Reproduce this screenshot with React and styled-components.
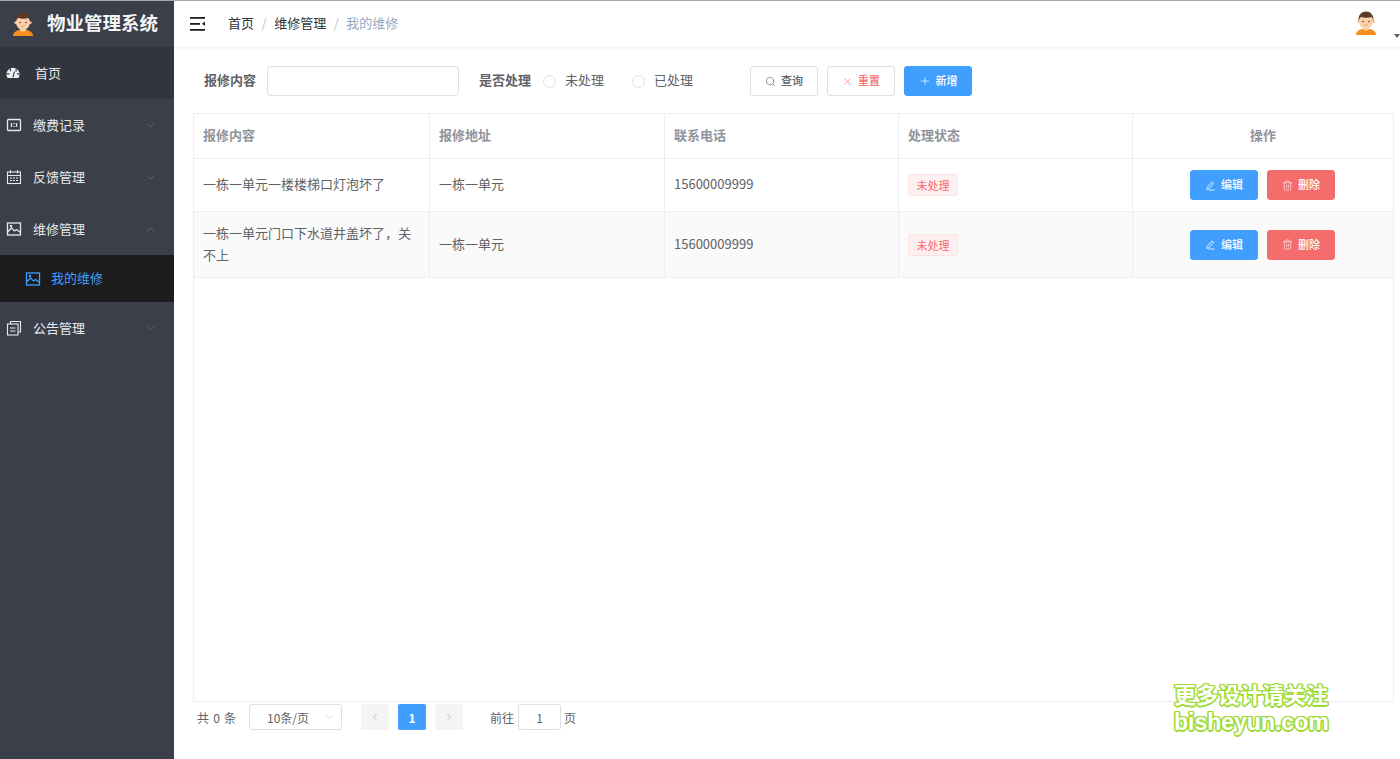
import React from "react";
import styled, { createGlobalStyle } from "styled-components";
import { ChevronDown, ChevronUp, ChevronLeft, ChevronRight, Search, X, Plus, Trash2 } from "lucide-react";

const Global = createGlobalStyle`
  html, body { margin: 0; padding: 0; height: 100%; background: #fff; }
  #root { height: 100%; }
  * { box-sizing: border-box; }
  body { font-family: "Noto Sans CJK SC", "Noto Sans", sans-serif; font-size: 13px; color: #606266; }
`;

const Page = styled.div`
  position: relative;
  display: flex;
  width: 1400px;
  height: 759px;
  overflow: hidden;
  border-top: 1px solid #a9a9a9;
`;
const Sidebar = styled.aside`
  width: 174px;
  flex: none;
  background: #3a3f4a;
  color: #e4e6ea;
  margin-top: -1px;
`;
const Brand = styled.div`
  display: flex;
  align-items: center;
  height: 47px;
  padding-left: 13px;
  gap: 14px;
  font-size: 18.5px;
  font-weight: 700;
  color: #f4f5f6;
  span { padding-bottom: 4px; }
`;
const MenuRow = styled.div`
  display: flex;
  align-items: center;
  height: 52px;
  padding-left: 6px;
  padding-right: 17px;
  background: ${(p) => (p.$home ? "#31353e" : "transparent")};
  gap: ${(p) => (p.$home ? "15px" : "11px")};
  color: #e8e9ec;
`;
const SubRow = styled.div`
  display: flex;
  align-items: center;
  height: 47px;
  padding-left: 25px;
  gap: 10px;
  background: #1c1c1d;
  color: #409eff;
`;
const MenuLabel = styled.span`
  flex: 1;
  padding-bottom: 2px;
`;
const Chevron = styled.span`
  display: flex;
  color: #767b85;
`;
const Main = styled.main`
  flex: 1;
  display: flex;
  flex-direction: column;
  min-width: 0;
`;
const Header = styled.header`
  display: flex;
  align-items: center;
  height: 46px;
  padding-left: 16px;
  box-shadow: 0 1px 4px rgba(0, 21, 41, 0.08);
  flex: none;
`;
const Crumbs = styled.nav`
  display: flex;
  align-items: center;
  margin-left: 22px;
  padding-bottom: 4px;
  flex: 1;
  color: #303133;
`;
const Crumb = styled.span`
  color: ${(p) => (p.$last ? "#97a8be" : "#303133")};
`;
const Sep = styled.span`
  margin: 0 7.5px;
  color: #c0c4cc;
`;
const UserBox = styled.div`
  position: relative;
  width: 44px;
  height: 46px;
  padding-top: 10px;
`;
const Caret = styled.i`
  position: absolute;
  right: 0;
  top: 33px;
  width: 0;
  height: 0;
  border: 3px solid transparent;
  border-top: 4px solid #606266;
`;
const Content = styled.div`
  flex: 1;
  display: flex;
  flex-direction: column;
  padding: 19px 7px 0 19px;
`;
const Filter = styled.div`
  display: flex;
  align-items: center;
  height: 30px;
  padding-left: 11px;
`;
const FilterLabel = styled.label`
  font-weight: 700;
  color: #606266;
  padding-bottom: 4px;
`;
const TextInput = styled.div`
  width: 192px;
  height: 30px;
  margin: 0 20px 0 11px;
  border: 1px solid #dcdfe6;
  border-radius: 4px;
  background: #fff;
`;
const RadioItem = styled.span`
  display: flex;
  align-items: center;
  gap: 9px;
  margin-left: ${(p) => p.$ml}px;
  color: #606266;
  b { font-weight: 400; padding-bottom: 3px; }
`;
const RadioDot = styled.i`
  width: 13px;
  height: 13px;
  border: 1px solid #dcdfe6;
  border-radius: 50%;
`;
const Btn = styled.button`
  display: inline-flex;
  align-items: center;
  justify-content: center;
  gap: 5px;
  width: 68px;
  height: 30px;
  padding: 0;
  border-radius: 3px;
  font: 500 11px "Noto Sans CJK SC", sans-serif;
  border: 1px solid ${(p) => p.$border};
  background: ${(p) => p.$bg};
  color: ${(p) => p.$color};
  margin-left: ${(p) => p.$ml || 0}px;
  span { padding-bottom: 2px; }
`;
const Table = styled.table`
  width: 1200px;
  margin: -1px 0 0 -1px;
  table-layout: fixed;
  border-collapse: collapse;
`;
const TableFrame = styled.div`
  height: 589px;
  margin-top: 17px;
  width: 1201px;
  border: 1px solid #ebeef5;
`;
const Th = styled.th`
  height: 45px;
  padding: 0 9px 3px;
  text-align: ${(p) => (p.$center ? "center" : "left")};
  color: #909399;
  font-size: 13px;
  font-weight: 700;
  border: 1px solid #ebeef5;
`;
const Tr = styled.tr`
  background: ${(p) => (p.$stripe ? "#fafafa" : "#fff")};
  height: ${(p) => p.$h}px;
`;
const Td = styled.td`
  padding: 0 9px ${(p) => (p.$widget ? "0" : "2px")};
  line-height: 22px;
  color: #606266;
  border: 1px solid #ebeef5;
`;
const Tag = styled.span`
  display: inline-block;
  width: 50px;
  height: 22px;
  line-height: 20px;
  text-align: center;
  font-size: 11px;
  color: #f56c6c;
  background: #fef0f0;
  border: 1px solid #fde2e2;
  border-radius: 3px;
`;
const Actions = styled.div`
  display: flex;
  justify-content: center;
  gap: 9px;
  margin-right: 1px;
`;
const Pager = styled.div`
  display: flex;
  align-items: center;
  height: 26px;
  margin-top: 2px;
  padding-left: 4px;
  font-size: 12px;
  color: #606266;
`;
const Total = styled.span`
  word-spacing: 1.5px;
`;
const SizeBox = styled.div`
  display: flex;
  align-items: center;
  justify-content: space-between;
  width: 93px;
  height: 26px;
  margin-left: 13px;
  padding: 0 6px 0 17px;
  border: 1px solid #dcdfe6;
  border-radius: 3px;
  color: #606266;
`;
const PageBtn = styled.span`
  display: flex;
  align-items: center;
  justify-content: center;
  width: 28px;
  height: 26px;
  border-radius: 2px;
  margin-left: ${(p) => p.$ml}px;
  background: ${(p) => (p.$active ? "#409eff" : "#f4f4f5")};
  color: ${(p) => (p.$active ? "#fff" : "#c0c4cc")};
  font-weight: 700;
`;
const Goto = styled.span`
  margin-left: 27px;
`;
const GotoInput = styled.span`
  display: inline-flex;
  align-items: center;
  justify-content: center;
  width: 43px;
  height: 26px;
  margin: 0 3px 0 4px;
  border: 1px solid #dcdfe6;
  border-radius: 3px;
`;
const Watermark = styled.div`
  position: absolute;
  left: 1174px;
  top: 682px;
  width: 160px;
  font-family: "Liberation Sans", "Noto Sans CJK SC", sans-serif;
  font-weight: 700;
  color: #fff;
  line-height: 26px;
  text-shadow: 1.5px 0 0 #9ddc35, -1.5px 0 0 #9ddc35, 0 1.5px 0 #9ddc35, 0 -1.5px 0 #9ddc35,
    1.2px 1.2px 0 #9ddc35, -1.2px 1.2px 0 #9ddc35, 1.2px -1.2px 0 #9ddc35, -1.2px -1.2px 0 #9ddc35;
`;
const WmLine = styled.div`
  font-size: ${(p) => p.$size}px;
  white-space: nowrap;
`;

const Avatar = () => (
  <svg width="20" height="24" viewBox="2 0 20 24" style={{ flex: "none" }}>
    <path d="M2 24c0-4 4-5.500 6-6h8c2 .5 6 2 6 6z" fill="#f98d1e" />
    <path d="M9 16h6v2.500c-1 1.500-5 1.500-6 0z" fill="#fbcfa5" />
    <circle cx="4.800" cy="10.500" r="1.500" fill="#f6bd92" />
    <circle cx="19.200" cy="10.500" r="1.500" fill="#f6bd92" />
    <ellipse cx="12" cy="10.500" rx="7" ry="7.500" fill="#fbd0ab" />
    <path d="M4.600 10.500C3.800 3.800 8 .6 12 .6s8.200 3.200 7.400 9.900c-.5-2-1-3.600-2-4.400-3 1-7.400 1-10.200-.4-1.400 1-2.100 2.800-2.600 4.800z" fill="#5a3a28" />
    <circle cx="9" cy="10.500" r=".8" fill="#5a3a28" />
    <circle cx="15" cy="10.500" r=".8" fill="#5a3a28" />
    <path d="M10.500 14h3" stroke="#c98a62" strokeWidth=".7" />
  </svg>
);

const Stroke = ({ size = 16, children, sw = 1.3 }) => (
  <svg width={size} height={size} viewBox="0 0 16 16" fill="none" stroke="currentColor" strokeWidth={sw} style={{ flex: "none" }}>
    {children}
  </svg>
);

const PictureIcon = () => (
  <Stroke>
    <rect x="1.500" y="2" width="13" height="12" />
    <path d="M1.500 11l4-4 3 3 2-1.500 4 3" />
    <circle cx="5" cy="5" r=".6" />
  </Stroke>
);
const TicketIcon = () => (
  <Stroke>
    <rect x="1.500" y="2.500" width="13" height="11" rx="1" />
    <path d="M5.500 6v4M8 6v1M8 9v1M10.500 6v4" />
  </Stroke>
);
const CalendarIcon = () => (
  <Stroke sw={1.1}>
    <rect x="1.500" y="3" width="13" height="11.500" />
    <path d="M1.500 6.500h13M4.500 1v3.500M11.500 1v3.500M4 9h2M7 9h2M10 9h2M4 11.500h2M7 11.500h2M10 11.500h2" />
  </Stroke>
);
const DocsIcon = () => (
  <Stroke sw={1.1}>
    <rect x="1.500" y="4" width="10.500" height="11" />
    <path d="M4.500 4V1.500h10V12H12M4 8h5.500M4 11h5.500" />
  </Stroke>
);
const GaugeSolid = () => (
  <svg width="14" height="14" viewBox="0 0 16 16" style={{ flex: "none" }}>
    <path d="M8 2a7.500 7.500 0 0 0-7.500 7.500c0 1.800.6 3.200 1.400 4.300h12.200c.8-1.100 1.400-2.500 1.400-4.300A7.500 7.500 0 0 0 8 2z" fill="#f0f1f3" />
    <path d="M8 13 9.600 6.500M5 2.500v3.500M11.500 3v3.500M.5 9h3.500M12.500 9h3" stroke="#31353e" strokeWidth="1.300" />
  </svg>
);
const Hamburger = () => (
  <svg width="16" height="14" viewBox="0 0 16 14" fill="#1f2024">
    <rect x="0" y="0" width="15" height="1.800" />
    <rect x="0" y="6" width="10" height="1.800" />
    <rect x="0" y="12" width="15" height="1.800" />
    <path d="M15 4.600v4.400l-3-2.200z" />
  </svg>
);
const Pen = () => (
  <Stroke size={11} sw={1.2}>
    <path d="M3 11 10 3l2.500 2-7 8-2.800.600zM5 14.500h9" />
  </Stroke>
);

const rows = [
  { text: "一栋一单元一楼楼梯口灯泡坏了", h: 53 },
  { text: "一栋一单元门口下水道井盖坏了，关不上", h: 66, stripe: true },
];

const menu = [
  { label: "缴费记录", icon: <TicketIcon /> },
  { label: "反馈管理", icon: <CalendarIcon /> },
  { label: "维修管理", icon: <PictureIcon />, open: true },
];

export default function App() {
  return (
    <>
      <Global />
      <Page>
        <Sidebar>
          <Brand>
            <Avatar />
            <span>物业管理系统</span>
          </Brand>
          <MenuRow $home>
            <GaugeSolid />
            <MenuLabel>首页</MenuLabel>
          </MenuRow>
          {menu.map((m) => (
            <MenuRow key={m.label}>
              {m.icon}
              <MenuLabel>{m.label}</MenuLabel>
              <Chevron>{m.open ? <ChevronUp size={13} strokeWidth={1.2} /> : <ChevronDown size={13} strokeWidth={1.2} />}</Chevron>
            </MenuRow>
          ))}
          <SubRow>
            <PictureIcon />
            <MenuLabel>我的维修</MenuLabel>
          </SubRow>
          <MenuRow>
            <DocsIcon />
            <MenuLabel>公告管理</MenuLabel>
            <Chevron><ChevronDown size={13} strokeWidth={1.2} /></Chevron>
          </MenuRow>
        </Sidebar>
        <Main>
          <Header>
            <Hamburger />
            <Crumbs>
              <Crumb>首页</Crumb>
              <Sep>/</Sep>
              <Crumb>维修管理</Crumb>
              <Sep>/</Sep>
              <Crumb $last>我的维修</Crumb>
            </Crumbs>
            <UserBox>
              <Avatar />
              <Caret />
            </UserBox>
          </Header>
          <Content>
            <Filter>
              <FilterLabel>报修内容</FilterLabel>
              <TextInput />
              <FilterLabel>是否处理</FilterLabel>
              <RadioItem $ml={12}><RadioDot /><b>未处理</b></RadioItem>
              <RadioItem $ml={28}><RadioDot /><b>已处理</b></RadioItem>
              <Btn $ml={57} $bg="#fff" $border="#dcdfe6" $color="#606266"><Search size={11} strokeWidth={1.4} /><span>查询</span></Btn>
              <Btn $ml={9} $bg="#fff" $border="#dcdfe6" $color="#f56c6c"><X size={11} strokeWidth={1.4} /><span>重置</span></Btn>
              <Btn $ml={9} $bg="#409eff" $border="#409eff" $color="#fff"><Plus size={12} strokeWidth={1.4} /><span>新增</span></Btn>
            </Filter>
            <TableFrame>
              <Table>
                <colgroup>
                  <col width="236" />
                  <col width="235" />
                  <col width="234" />
                  <col width="234" />
                  <col width="261" />
                </colgroup>
                <thead>
                  <tr>
                    <Th>报修内容</Th>
                    <Th>报修地址</Th>
                    <Th>联系电话</Th>
                    <Th>处理状态</Th>
                    <Th $center>操作</Th>
                  </tr>
                </thead>
                <tbody>
                  {rows.map((r) => (
                    <Tr key={r.text} $h={r.h} $stripe={r.stripe}>
                      <Td>{r.text}</Td>
                      <Td>一栋一单元</Td>
                      <Td>15600009999</Td>
                      <Td $widget><Tag>未处理</Tag></Td>
                      <Td $widget>
                        <Actions>
                          <Btn $bg="#409eff" $border="#409eff" $color="#fff"><Pen /><span>编辑</span></Btn>
                          <Btn $bg="#f56c6c" $border="#f56c6c" $color="#fff"><Trash2 size={11} strokeWidth={1.3} /><span>删除</span></Btn>
                        </Actions>
                      </Td>
                    </Tr>
                  ))}
                </tbody>
              </Table>
            </TableFrame>
            <Pager>
              <Total>共 0 条</Total>
              <SizeBox>
                <span>10条/页</span>
                <ChevronDown size={12} strokeWidth={1.1} color="#c0c4cc" />
              </SizeBox>
              <PageBtn $ml={19}><ChevronLeft size={12} /></PageBtn>
              <PageBtn $ml={9} $active>1</PageBtn>
              <PageBtn $ml={9}><ChevronRight size={12} /></PageBtn>
              <Goto>前往</Goto>
              <GotoInput>1</GotoInput>
              <span>页</span>
            </Pager>
          </Content>
        </Main>
        <Watermark>
          <WmLine $size={22}>更多设计请关注</WmLine>
          <WmLine $size={23}>bisheyun.com</WmLine>
        </Watermark>
      </Page>
    </>
  );
}
